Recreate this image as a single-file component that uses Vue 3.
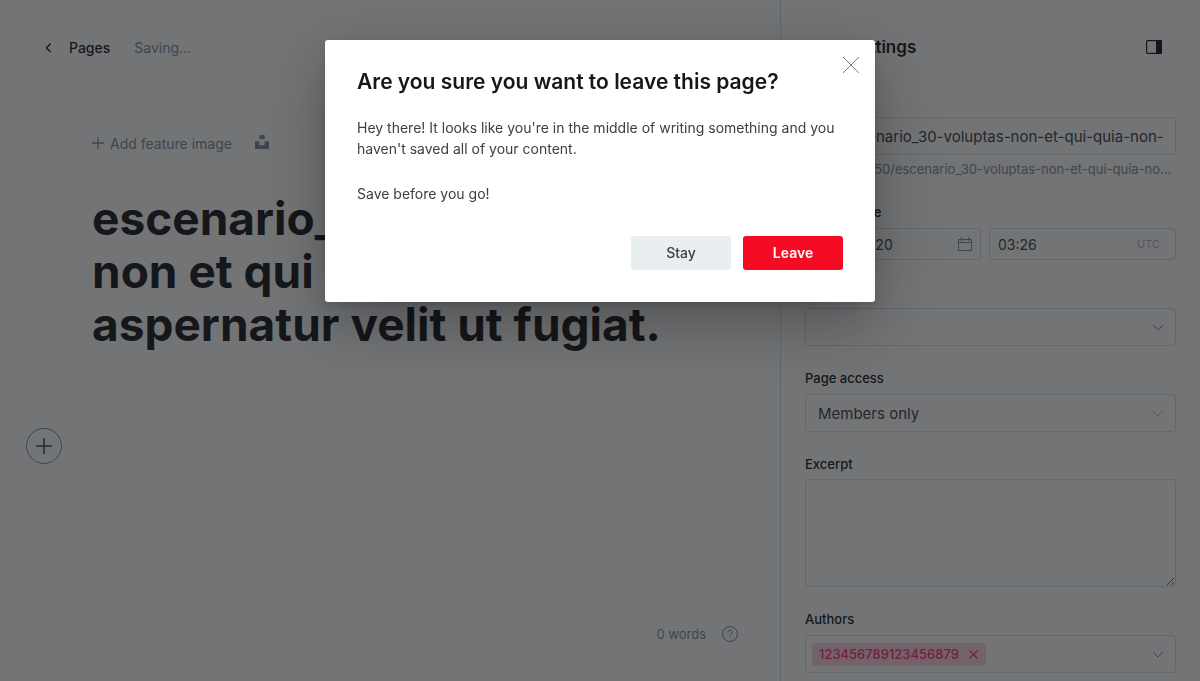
<script setup>
import { ref } from 'vue'

const title = ref('escenario_30 voluptas non et qui quia non aut aspernatur velit ut fugiat.')
const slug = ref('escenario_30-voluptas-non-et-qui-quia-non-aut-aspernatur-velit-ut-fugiat')
const date = ref('2021-05-20')
const time = ref('03:26')
const access = ref('Members only')
const excerpt = ref('')
const authors = ref(['123456789123456879'])
const open = ref(true)
</script>

<template>
  <div class="app">
    <main class="editor">
      <header class="topbar">
        <a class="back" href="#pages">
          <svg width="8" height="12" viewBox="0 0 8 12"><path d="M6.500 2.500 2.500 7l4 4" fill="none" stroke="currentColor" stroke-width="1.4" /></svg>
          <span>Pages</span>
        </a>
        <span class="status">Saving...</span>
      </header>

      <div class="canvas">
        <div class="feature">
          <button class="add-image" type="button">
            <svg width="12" height="12" viewBox="0 0 12 12"><path d="M6 0v12M0 6h12" fill="none" stroke="currentColor" stroke-width="1.3" /></svg>
            <span>Add feature image</span>
          </button>
          <button class="unsplash" type="button" aria-label="Choose an Unsplash image">
            <svg width="14" height="14" viewBox="0 0 14 14"><path d="M4.4 0h5.2v4H4.4zM0 6.2h4.4v4h5.2v-4H14V14H0z" fill="currentColor" /></svg>
          </button>
        </div>
        <textarea v-model="title" class="title" rows="3" aria-label="Page title"></textarea>
        <button class="add-card" type="button" aria-label="Add a card">
          <svg width="16" height="16" viewBox="0 0 16 16"><path d="M8 0v16M0 8h16" fill="none" stroke="currentColor" stroke-width="1.5" /></svg>
        </button>
      </div>

      <footer class="footer">
        <span>0 words</span>
        <a href="#help" aria-label="Help">
          <svg width="16" height="16" viewBox="0 0 16 16" fill="none" stroke="currentColor">
            <circle cx="8" cy="8" r="7.5" />
            <path d="M5.8 6.3a2.2 2.2 0 1 1 3.1 2C8.2 8.7 8 9 8 9.9" stroke-linecap="round" />
            <circle cx="8" cy="11.8" r=".6" fill="currentColor" stroke="none" />
          </svg>
        </a>
      </footer>
    </main>

    <aside class="settings">
      <header class="settings-head">
        <h2>Page settings</h2>
        <button type="button" aria-label="Toggle settings">
          <svg width="16" height="14" viewBox="0 0 16 14"><rect x=".6" y=".6" width="14.8" height="12.8" rx="1" fill="none" stroke="currentColor" stroke-width="1.2" /><path d="M10 0h5a1 1 0 0 1 1 1v12a1 1 0 0 1-1 1h-5z" fill="currentColor" /></svg>
        </button>
      </header>

      <div class="group">
        <label for="url">Page URL</label>
        <div class="box url">
          <svg width="14" height="14" viewBox="0 0 14 14" fill="none" stroke="currentColor"><path d="m5.5 8.5 3-3M6 4l2-2a2.8 2.8 0 0 1 4 4l-2 2M8 10l-2 2a2.8 2.8 0 0 1-4-4l2-2" /></svg>
          <input id="url" v-model="slug" type="text" />
        </div>
        <p class="hint">127.0.0.1:2350/escenario_30-voluptas-non-et-qui-quia-non-aut-aspernatur</p>
      </div>

      <div class="group">
        <label for="date">Publish date</label>
        <div class="dates">
          <div class="box small">
            <input id="date" v-model="date" type="text" />
            <svg width="14" height="14" viewBox="0 0 14 14" fill="none" stroke="currentColor"><path d="M.5 2.5h13v11H.5zM.5 5.5h13M3.5 0v4M10.5 0v4" /></svg>
          </div>
          <div class="box small">
            <input v-model="time" type="text" aria-label="Publish time" />
            <span class="zone">UTC</span>
          </div>
        </div>
      </div>

      <div class="group">
        <label for="tags">Tags</label>
        <div class="box">
          <input id="tags" type="text" />
          <svg class="chevron" width="12" height="7" viewBox="0 0 12 7"><path d="m1 1 5 5 5-5" fill="none" stroke="currentColor" /></svg>
        </div>
      </div>

      <div class="group access">
        <label for="access">Page access</label>
        <div class="box">
          <select id="access" v-model="access"><option>Members only</option><option>Public</option></select>
          <svg class="chevron" width="12" height="7" viewBox="0 0 12 7"><path d="m1 1 5 5 5-5" fill="none" stroke="currentColor" /></svg>
        </div>
      </div>

      <div class="group">
        <label class="tight" for="excerpt">Excerpt</label>
        <textarea id="excerpt" v-model="excerpt" class="box excerpt"></textarea>
      </div>

      <div class="group">
        <label for="authors">Authors</label>
        <div class="box authors">
          <span v-for="name in authors" :key="name" class="chip">
            <span>{{ name }}</span>
            <button type="button" aria-label="Remove author">
              <svg width="9" height="9" viewBox="0 0 9 9"><path d="m.5.5 8 8m0-8-8 8" fill="none" stroke="currentColor" stroke-width="1.2" /></svg>
            </button>
          </span>
          <input id="authors" type="text" />
          <svg class="chevron" width="12" height="7" viewBox="0 0 12 7"><path d="m1 1 5 5 5-5" fill="none" stroke="currentColor" /></svg>
        </div>
      </div>
    </aside>

    <div v-if="open" class="overlay">
      <section class="modal" role="dialog" aria-modal="true" aria-labelledby="leave-title">
        <button class="close" type="button" aria-label="Close" @click="open = false">
          <svg width="16" height="16" viewBox="0 0 16 16"><path d="m0 0 16 16M16 0 0 16" fill="none" stroke="currentColor" /></svg>
        </button>
        <h1 id="leave-title">Are you sure you want to leave this page?</h1>
        <p>Hey there! It looks like you're in the middle of writing something and you haven't saved all of your content.</p>
        <p>Save before you go!</p>
        <div class="actions">
          <button class="stay" type="button" @click="open = false">Stay</button>
          <button class="leave" type="button">Leave</button>
        </div>
      </section>
    </div>
  </div>
</template>

<style>
body {
  margin: 0;
  overflow: hidden;
}
</style>

<style scoped>
* {
  box-sizing: border-box;
}
.app {
  display: flex;
  height: 100vh;
  overflow: hidden;
  background: #fff;
  color: #15171a;
  font-family: Inter, "Liberation Sans", sans-serif;
  font-size: 14px;
}
button,
input,
select,
textarea {
  margin: 0;
  padding: 0;
  border: 0;
  outline: 0;
  background: none;
  color: inherit;
  font: inherit;
}
svg {
  display: block;
  flex: none;
}
.editor {
  display: flex;
  flex: 1;
  flex-direction: column;
  min-width: 0;
}
.topbar {
  display: flex;
  align-items: center;
  gap: 24px;
  height: 94px;
  padding: 0 44px;
}
.back {
  display: flex;
  align-items: center;
  gap: 17px;
  color: #15171a;
  font-weight: 500;
  text-decoration: none;
}
.status {
  color: #7c8b9a;
}
.canvas {
  flex: 1;
  padding: 37px 92px 0;
}
.feature {
  display: flex;
  align-items: center;
  gap: 23px;
  height: 24px;
  color: #7c8b9a;
}
.add-image {
  display: flex;
  align-items: center;
  gap: 6px;
}
.unsplash {
  padding-bottom: 2px;
}
.title {
  display: block;
  width: 100%;
  height: 159px;
  margin-top: 37px;
  overflow: hidden;
  resize: none;
  font-size: 46px;
  font-weight: 700;
  line-height: 53px;
}
.add-card {
  display: grid;
  place-items: center;
  width: 36px;
  height: 36px;
  margin: 77px 0 0 -66px;
  border: 1px solid #7c8b9a;
  border-radius: 50%;
  color: #394047;
}
.footer {
  display: flex;
  align-items: center;
  justify-content: flex-end;
  gap: 16px;
  height: 95px;
  padding-right: 42px;
  color: #7c8b9a;
  font-size: 13px;
}
.footer a {
  color: inherit;
}
.settings {
  width: 420px;
  padding: 0 24px;
  border-left: 1px solid #dae1e3;
}
.settings-head {
  display: flex;
  align-items: center;
  justify-content: space-between;
  height: 93px;
  padding: 1px 14px 0 0;
}
.settings-head h2 {
  margin: 0;
  font-size: 17px;
  font-weight: 600;
}
.group {
  margin-bottom: 24px;
}
.group label {
  display: block;
  margin-bottom: 8px;
  font-size: 13px;
  font-weight: 500;
  line-height: 16px;
}
.group .tight {
  margin-bottom: 7px;
}
.box {
  display: flex;
  align-items: center;
  width: 100%;
  height: 38px;
  padding: 0 12px;
  border: 1px solid #dae1e3;
  border-radius: 3px;
  color: #394047;
  font-size: 15px;
}
.box input,
.box select {
  flex: 1;
  min-width: 0;
  height: 100%;
  appearance: none;
}
.url {
  gap: 10px;
}
.hint {
  margin: 4px 4px 0 0;
  overflow: hidden;
  color: #7c8b9a;
  font-size: 13px;
  line-height: 21px;
  text-overflow: ellipsis;
  white-space: nowrap;
}
.dates {
  display: grid;
  grid-template-columns: 176fr 187fr;
  gap: 8px;
}
.small {
  min-width: 0;
  height: 32px;
  padding: 0 8px;
  font-size: 14px;
}
.small svg {
  color: #7c8b9a;
}
.zone {
  padding-right: 7px;
  color: #abb4be;
  font-size: 11px;
}
.chevron {
  margin-right: -1px;
  color: #7c8b9a;
}
.access .chevron {
  color: #abb4be;
}
.group .excerpt {
  display: block;
  height: 108px;
  padding: 8px 12px;
  resize: vertical;
}
.authors {
  padding-left: 6px;
}
.chip {
  display: flex;
  align-items: center;
  gap: 10px;
  height: 23px;
  padding: 0 8px 0 7px;
  border-radius: 3px;
  background: #ffd3e2;
  color: #fb2d76;
  font-size: 13px;
  font-weight: 500;
}
.overlay {
  position: fixed;
  inset: 0;
  padding-top: 40px;
  background: rgba(21, 23, 26, 0.6);
}
.modal {
  position: relative;
  max-width: 550px;
  margin: 0 auto;
  padding: 27px 32px 32px;
  border-radius: 3px;
  background: #fff;
  box-shadow: 0 3px 7px rgba(0, 0, 0, 0.12), 0 20px 60px rgba(0, 0, 0, 0.3);
}
.close {
  position: absolute;
  top: 17px;
  right: 16px;
  color: #7c8086;
}
.modal h1 {
  margin: 0 0 20px;
  font-size: 21px;
  font-weight: 600;
  line-height: 30px;
}
.modal p {
  margin: 0 0 24px;
  color: #394047;
  font-size: 14px;
  line-height: 21px;
}
.actions {
  display: flex;
  justify-content: flex-end;
  gap: 12px;
  margin-top: 32px;
}
.actions button {
  width: 100px;
  height: 34px;
  padding-bottom: 1px;
  border-radius: 3px;
  font-size: 14px;
}
.actions .stay {
  background: #e9eef1;
  color: #394047;
  font-weight: 500;
}
.actions .leave {
  background: #f50b23;
  color: #fff;
  font-weight: 600;
}
</style>
